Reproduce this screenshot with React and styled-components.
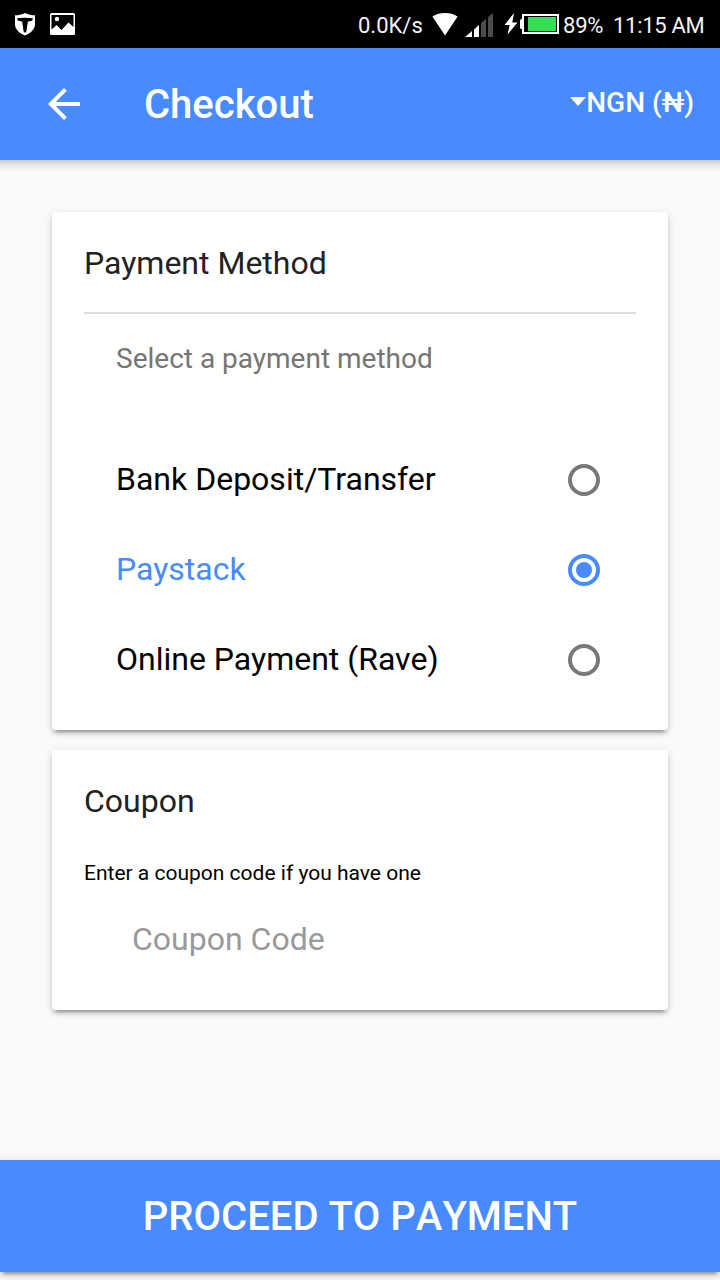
import React, { useState } from "react";
import styled, { createGlobalStyle } from "styled-components";


const GlobalStyle = createGlobalStyle`
    * {
        box-sizing: border-box;
    }

    body {
        margin: 0;
        background: #fafafa;
        font-family: Roboto, "Noto Sans", sans-serif;
    }
`;

const Page = styled.div`
    display: flex;
    flex-direction: column;
    width: 720px;
    height: 1280px;
    overflow: hidden;
    background: #fafafa;
`;

const StatusBar = styled.div`
    display: flex;
    align-items: center;
    justify-content: space-between;
    flex: none;
    height: 48px;
    padding: 0 16px 0 14px;
    background: #000;
    color: #f4f4f4;
    font-size: 22px;
    line-height: 52px;
    white-space: nowrap;

    svg {
        display: block;
        flex: none;
    }
`;

const StatusGroup = styled.div`
    display: flex;
    align-items: center;
    gap: ${props => props.$gap || 0}px;
`;

const StatusIcons = styled.div`
    display: flex;
    align-items: center;
    height: 48px;
    padding: 2px 3px 0 8px;
    gap: 7px;
`;

const StatusText = styled.span`
    width: ${props => props.$width}px;
    height: 48px;
    margin-right: ${props => props.$after || 0}px;
    letter-spacing: ${props => props.$spacing || 0}px;
`;

const Toolbar = styled.header`
    display: flex;
    align-items: center;
    flex: none;
    height: 112px;
    padding: 0 26px 0 48px;
    background: #488aff;
    color: #fff;
`;

const IconButton = styled.button`
    display: flex;
    padding: 0;
    border: 0;
    background: none;
    color: inherit;
`;

const Title = styled.h1`
    flex: 1;
    margin: 0 0 0 64px;
    padding-top: 2px;
    font-size: 40px;
    font-weight: 500;
    line-height: 48px;
`;

const Currency = styled.button`
    display: flex;
    align-items: center;
    padding: 0 0 3px;
    border: 0;
    background: none;
    color: inherit;
    font-family: inherit;
    font-size: 28px;
    font-weight: 500;
    line-height: 34px;
`;

const Caret = styled.span`
    margin-bottom: 2px;
    border-top: 9px solid #fff;
    border-left: 8px solid transparent;
    border-right: 8px solid transparent;
`;

const Content = styled.main`
    display: flex;
    flex: 1;
    flex-direction: column;
    gap: 20px;
    padding: 52px 52px 0;
    background: linear-gradient(rgba(0, 0, 0, 0.19), rgba(0, 0, 0, 0.08) 5px, rgba(0, 0, 0, 0) 11px) no-repeat;
`;

const Card = styled.section`
    height: ${props => props.$height}px;
    padding: 32px 32px 0;
    border-radius: 4px;
    background: #fff;
    box-shadow: 0 4px 4px 0 rgba(0, 0, 0, 0.14), 0 6px 2px -4px rgba(0, 0, 0, 0.2), 0 2px 10px 0 rgba(0, 0, 0, 0.12);
`;

const CardTitle = styled.h2`
    margin: 0;
    color: #222;
    font-size: 32px;
    font-weight: 400;
    line-height: 38px;
`;

const Divider = styled.hr`
    height: 2px;
    margin: 30px 0 0;
    border: 0;
    background: #dedede;
`;

const ListHeader = styled.p`
    margin: 0;
    padding: 28px 32px 60px;
    color: #757575;
    font-size: 28px;
    line-height: 33px;
`;

const Option = styled.div`
    display: flex;
    align-items: center;
    justify-content: space-between;
    height: 90px;
    padding: 0 36px 0 32px;
    color: ${props => (props.$checked ? "#488aff" : "#000")};
    font-size: 32px;
    line-height: 38px;
`;

const OptionLabel = styled.span`
    padding-bottom: 2px;
`;

const Radio = styled.span`
    display: flex;
    align-items: center;
    justify-content: center;
    width: 32px;
    height: 32px;
    border: 4px solid ${props => (props.$checked ? "#488aff" : "#787878")};
    border-radius: 50%;
`;

const RadioDot = styled.span`
    width: 16px;
    height: 16px;
    border-radius: 50%;
    background: #488aff;
`;

const Hint = styled.p`
    margin: 41px 0 0;
    color: #000;
    font-size: 21px;
    line-height: 25px;
`;

const CouponInput = styled.input`
    display: block;
    width: 456px;
    height: 38px;
    margin: 34px 48px 0;
    padding: 0;
    border: 0;
    outline: 0;
    background: none;
    font-family: inherit;
    font-size: 32px;

    &::placeholder {
        color: #999;
        opacity: 1;
    }
`;

const ProceedButton = styled.button`
    flex: none;
    width: 100%;
    height: 112px;
    margin-bottom: 8px;
    padding: 0;
    border: 0;
    background: #488aff;
    color: #fff;
    font-family: inherit;
    font-size: 40px;
    font-weight: 500;
    font-kerning: none;
    text-transform: uppercase;
    box-shadow: 0 4px 4px 0 rgba(0, 0, 0, 0.14), 0 6px 2px -4px rgba(0, 0, 0, 0.2), 0 2px 10px 0 rgba(0, 0, 0, 0.12);
`;


const ShieldIcon = () => (
    <svg width="22" height="24" viewBox="0 0 22 24">
        <path fill="#fff" d="M11 1c3 1.600 6.500 2.300 10 2.300v8.700c0 5.200-4 9-10 11.500C5 21 1 17.200 1 12V3.300C4.500 3.300 8 2.600 11 1z" />
        <path fill="#000" d="M3 6.200c5.300-.7 10.700-.7 16 0l-.8 2.300-4.400 1.300L12.500 19 11 21l-1.500-2-1.300-9.200-4.400-1.300z" />
    </svg>
);

const PictureIcon = () => (
    <svg width="25" height="22" viewBox="0 0 25 22">
        <rect width="25" height="22" rx="1.500" fill="#fff" />
        <path fill="#000" d="M1.500 2h22v12l-5-4.500-7 7.500-5-5-5 4.500z" />
        <circle cx="7" cy="6" r="2.200" fill="#fff" />
    </svg>
);

const WifiIcon = () => (
    <svg width="26" height="24" viewBox="0 0 26 24">
        <path fill="#fff" d="M.4 3.400C7.500-1.100 18.500-1.100 25.600 3.400L13 22.500z" />
    </svg>
);

const SignalIcon = () => (
    <svg width="28" height="24" viewBox="0 0 28 24">
        <path fill="#fff" d="M0 24l7-6v6zM9 16.500l5-4.500v12H9z" />
        <path fill="#4c4c4c" d="M16 10l5-4.300V24h-5zM23 4l5-4v24h-5z" />
    </svg>
);

const BatteryIcon = () => (
    <svg width="56" height="24" viewBox="0 0 56 24">
        <path fill="#fff" d="M10 0L.5 12h5.200L3.500 21.500 13.500 9.500H8.300z" />
        <path fill="#fff" d="M19 6h-1.500q-1.500 0-1.500 1.500v7q0 1.500 1.500 1.500H19z" />
        <rect x="19" y="2" width="35" height="18" fill="#000" stroke="#fff" strokeWidth="2" />
        <rect x="24" y="4" width="28" height="14" fill="#35df54" />
    </svg>
);

const BackIcon = () => (
    <svg width="32" height="32" viewBox="4 4 16 16">
        <path fill="#fff" d="M20 11H7.830l5.590-5.590L12 4l-8 8 8 8 1.410-1.410L7.830 13H20z" />
    </svg>
);


const methods = ["Bank Deposit/Transfer", "Paystack", "Online Payment (Rave)"];

const App = () => {
    const [selected, setSelected] = useState("Paystack");

    return (
        <>
            <GlobalStyle />
            <Page>
                <StatusBar>
                    <StatusGroup $gap={14}>
                        <ShieldIcon />
                        <PictureIcon />
                    </StatusGroup>
                    <StatusGroup>
                        <StatusText $width={66}>0.0K/s</StatusText>
                        <StatusIcons>
                            <WifiIcon />
                            <StatusGroup $gap={11}>
                                <SignalIcon />
                                <BatteryIcon />
                            </StatusGroup>
                        </StatusIcons>
                        <StatusText $width={40} $after={10} $spacing={-0.2}>89%</StatusText>
                        <StatusText $width={91} $spacing={-0.3}>11:15 AM</StatusText>
                    </StatusGroup>
                </StatusBar>
                <Toolbar>
                    <IconButton aria-label="Back"><BackIcon /></IconButton>
                    <Title>Checkout</Title>
                    <Currency><Caret />NGN (₦)</Currency>
                </Toolbar>
                <Content>
                    <Card $height={518}>
                        <CardTitle>Payment Method</CardTitle>
                        <Divider />
                        <ListHeader>Select a payment method</ListHeader>
                        {methods.map(method => (
                            <Option key={method} $checked={method === selected} onClick={() => setSelected(method)}>
                                <OptionLabel>{method}</OptionLabel>
                                <Radio $checked={method === selected}>
                                    {method === selected && <RadioDot />}
                                </Radio>
                            </Option>
                        ))}
                    </Card>
                    <Card $height={260}>
                        <CardTitle>Coupon</CardTitle>
                        <Hint>Enter a coupon code if you have one</Hint>
                        <CouponInput placeholder="Coupon Code" />
                    </Card>
                </Content>
                <ProceedButton>Proceed to payment</ProceedButton>
            </Page>
        </>
    );
}

export default App;
